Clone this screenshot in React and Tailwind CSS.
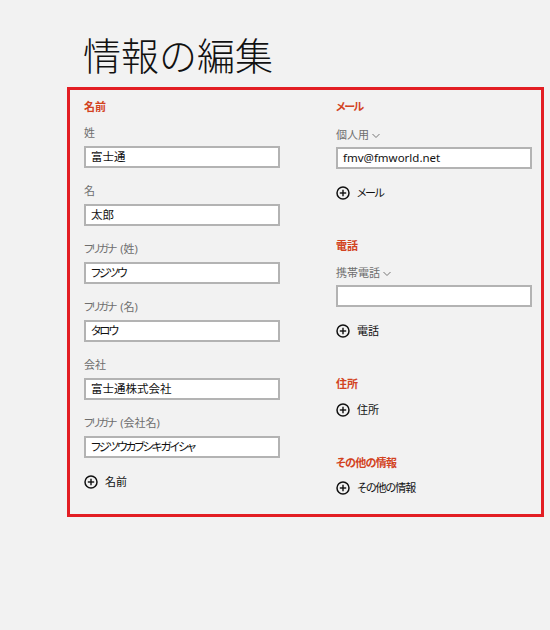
import React from "react";

const FONT = { fontFamily: '"Noto Sans", "Noto Sans CJK JP", sans-serif' };

function PlusCircle() {
  return (
    <svg width="14" height="14" viewBox="0 0 14 14" className="shrink-0">
      <circle cx="7" cy="7" r="6" fill="none" stroke="#111" strokeWidth="1.5" />
      <line x1="7" y1="3.8" x2="7" y2="10.2" stroke="#111" strokeWidth="1.4" />
      <line x1="3.8" y1="7" x2="10.2" y2="7" stroke="#111" strokeWidth="1.4" />
    </svg>
  );
}

function Chevron() {
  return (
    <svg width="8" height="6" viewBox="0 0 8 6" className="ml-[3px] mt-[1px]">
      <polyline points="0.5,1 4,4.5 7.5,1" fill="none" stroke="#777" strokeWidth="1" />
    </svg>
  );
}

function Heading({ children, className = "" }) {
  return (
    <div className={`h-[14px] text-[11px] leading-[14px] font-bold text-[#d2431f] ${className}`}>
      {children}
    </div>
  );
}

function Label({ children, className = "", dropdown = false }) {
  return (
    <div className={`flex items-center h-4 text-[11px] leading-4 text-[#6e6e6e] ${className}`}>
      {children}
      {dropdown && <Chevron />}
    </div>
  );
}

function Input({ value, className = "" }) {
  return (
    <div
      className={`h-[22px] w-[196px] border-2 border-[#b3b3b3] bg-white flex items-center pl-[5px] text-[11.5px] text-[#111] ${className}`}
    >
      {value}
    </div>
  );
}

function AddRow({ children, className = "" }) {
  return (
    <div className={`flex items-center h-4 gap-[7px] text-[11px] text-[#111] ${className}`}>
      <PlusCircle />
      <span>{children}</span>
    </div>
  );
}

function Field({ label, value, first }) {
  return (
    <div className={first ? "mt-[11px]" : "mt-[15px]"}>
      <Label>{label}</Label>
      <Input value={value} className="mt-[5px]" />
    </div>
  );
}

const K = ({ children }) => <span className="tracking-[-1.8px]">{children}</span>;
const Furi = ({ rest }) => (
  <span className="flex items-center">
    <span className="tracking-[-2px]">フリガナ</span>
    <span className="ml-[5px]">({rest})</span>
  </span>
);

export default function App() {
  return (
    <div className="w-[550px] h-[630px] bg-[#f2f2f2] overflow-hidden" style={FONT}>
      <div
        className="mt-[35px] ml-[83px] h-[37px] text-[38px] leading-[37px] font-light text-[#111]"
        style={{ fontFamily: '"Noto Sans CJK JP", sans-serif' }}
      >
        情報の編集
      </div>
      <div className="mt-[15px] ml-[67px] w-[477px] h-[430px] border-[3px] border-[#e31e24] pt-[10px] pl-[14px] flex gap-[56px] [font-feature-settings:'palt']">
        <div className="w-[196px] flex flex-col">
          <Heading>名前</Heading>
          <Field label="姓" value="富士通" first />
          <Field label="名" value="太郎" />
          <Field label={<Furi rest="姓" />} value={<K>フジツウ</K>} />
          <Field label={<Furi rest="名" />} value={<K>タロウ</K>} />
          <Field label="会社" value="富士通株式会社" />
          <Field label={<Furi rest="会社名" />} value={<K>フジツウカブシキガイシャ</K>} />
          <AddRow className="mt-[16px]">名前</AddRow>
        </div>
        <div className="w-[196px] flex flex-col">
          <Heading className="tracking-[-1.5px]">メール</Heading>
          <Label className="mt-[13px]" dropdown>個人用</Label>
          <Input value="fmv@fmworld.net" className="mt-[4px]" />
          <AddRow className="mt-[16px]"><span className="tracking-[-1.5px]">メール</span></AddRow>

          <Heading className="mt-[38px]">電話</Heading>
          <Label className="mt-[12px]" dropdown>携帯電話</Label>
          <Input value="" className="mt-[4px]" />
          <AddRow className="mt-[16px]">電話</AddRow>

          <Heading className="mt-[38px]">住所</Heading>
          <AddRow className="mt-[11px]">住所</AddRow>

          <Heading className="mt-[38px] tracking-[-0.7px]">その他の情報</Heading>
          <AddRow className="mt-[10px]"><span className="tracking-[-1px]">その他の情報</span></AddRow>
        </div>
      </div>
    </div>
  );
}
